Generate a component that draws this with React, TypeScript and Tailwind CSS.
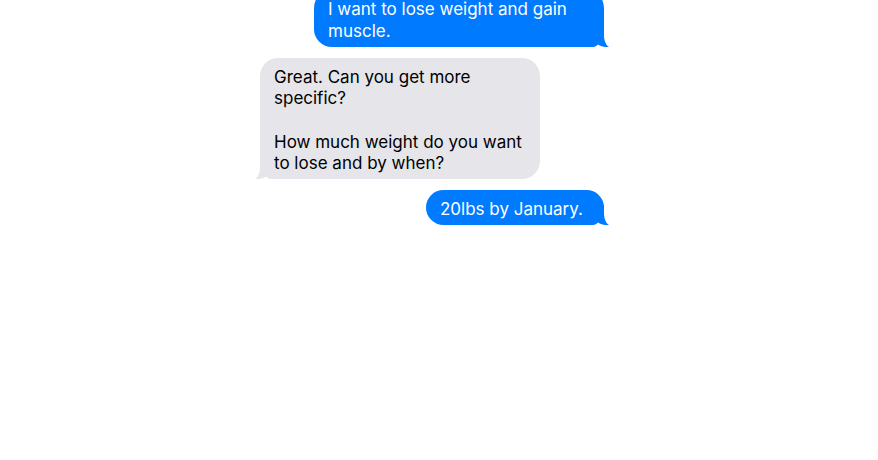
import React from "react";

type Msg = {
  id: number;
  from: "me" | "them";
  lines: string[];
  width?: string;
};

const messages: Msg[] = [
  { id: 1, from: "me", lines: ["I want to lose weight and gain muscle."], width: "w-[290px]" },
  {
    id: 2,
    from: "them",
    lines: ["Great. Can you get more specific?", "How much weight do you want to lose and by when?"],
    width: "w-[280px]",
  },
  { id: 3, from: "me", lines: ["20lbs by January."] },
];

const Tail = ({ color, flip }: { color: string; flip?: boolean }) => (
  <svg
    width="24"
    height="20"
    viewBox="0 0 24 20"
    className={`absolute bottom-0 ${flip ? "-left-[5px] -scale-x-100" : "-right-[5px]"}`}
  >
    <path
      d="M0 0 H19 V8 C19 14 21 18 24 20 C20 20.3 16 19.5 13 17.5 C11.5 19 10 20 8 20 H0 Z"
      fill={color}
    />
  </svg>
);

const Bubble = ({ msg }: { msg: Msg }) => {
  const mine = msg.from === "me";
  return (
    <div className={`flex ${mine ? "justify-end" : "justify-start"}`}>
      <div
        className={`relative rounded-[18px] pt-[9px] pb-[4.5px] pl-[14px] text-[17px] leading-[21.5px] ${
          msg.width ?? "w-fit"
        } ${mine ? "bg-[#007aff] pr-[21px] text-white" : "bg-[#e5e5ea] pr-[14px] text-black"}`}
      >
        <Tail color={mine ? "#007aff" : "#e5e5ea"} flip={!mine} />
        <div className="relative flex flex-col gap-[22px]">
          {msg.lines.map((line, i) => (
            <p key={i}>{line}</p>
          ))}
        </div>
      </div>
    </div>
  );
};

const App = () => {
  return (
    <div
      className="h-[460px] w-full overflow-hidden bg-white"
      style={{ fontFamily: "Inter, 'Noto Sans', sans-serif" }}
    >
      <div className="ml-[260px] -mt-[10px] flex w-[344px] flex-col gap-[11px]">
        {messages.map((m) => (
          <Bubble key={m.id} msg={m} />
        ))}
      </div>
    </div>
  );
};

export default App;
